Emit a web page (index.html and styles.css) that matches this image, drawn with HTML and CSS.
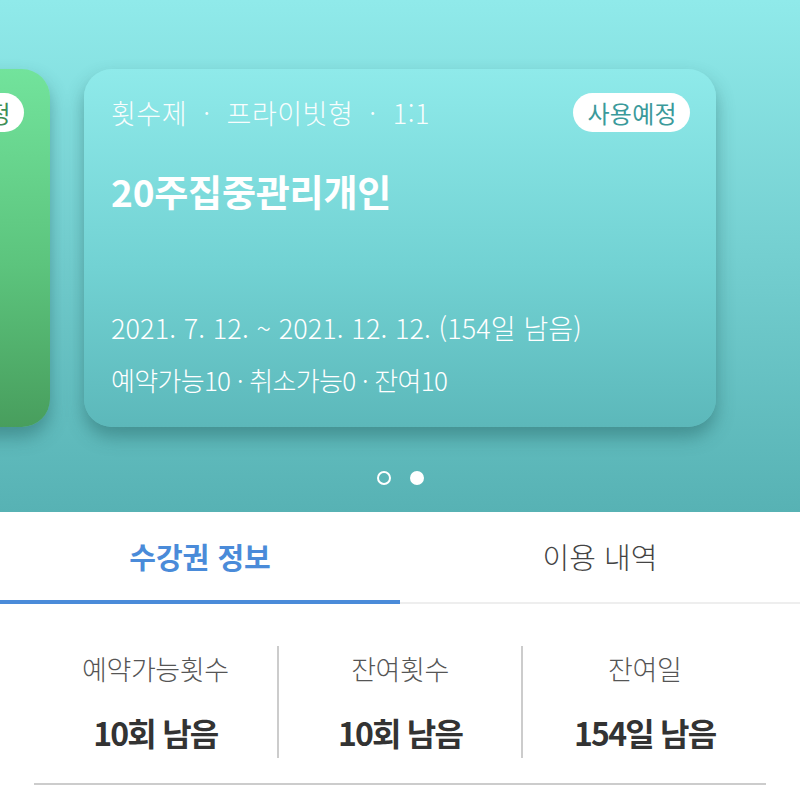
FILE: index.html
```html
<!DOCTYPE html>
<html lang="ko">
<head>
    <meta charset="UTF-8">
    <meta name="viewport" content="width=device-width, initial-scale=1.0">
    <title>수강권 정보</title>
    <link rel="stylesheet" href="styles.css">
</head>
<body>
    <div class="hero">
        <div class="card-track">
            <div class="pass-card pass-card-green">
                <div class="pass-top">
                    <span class="pass-meta">횟수제 · 프라이빗형 · 1:1</span>
                    <span class="pass-badge badge-green">사용예정</span>
                </div>
            </div>
            <div class="pass-card">
                <div class="pass-top">
                    <span class="pass-meta">횟수제 &nbsp;·&nbsp; 프라이빗형 &nbsp;·&nbsp; 1:1</span>
                    <span class="pass-badge">사용예정</span>
                </div>
                <h2 class="pass-title">20주집중관리개인</h2>
                <div class="pass-bottom">
                    <p class="pass-date">2021. 7. 12. ~ 2021. 12. 12. (154일 남음)</p>
                    <p class="pass-count">예약가능10 · 취소가능0 · 잔여10</p>
                </div>
            </div>
        </div>
        <div class="dots">
            <span class="dot"></span>
            <span class="dot active"></span>
        </div>
    </div>

    <div class="tabs">
        <div class="tab active">수강권 정보</div>
        <div class="tab">이용 내역</div>
    </div>

    <div class="stats">
        <div class="stat">
            <div class="stat-label">예약가능횟수</div>
            <div class="stat-value">10회 남음</div>
        </div>
        <div class="stat">
            <div class="stat-label">잔여횟수</div>
            <div class="stat-value">10회 남음</div>
        </div>
        <div class="stat">
            <div class="stat-label">잔여일</div>
            <div class="stat-value">154일 남음</div>
        </div>
    </div>
</body>
</html>
```

FILE: styles.css
```css
body {
    margin: 0;
    font-family: 'Noto Sans CJK KR', 'Noto Sans', sans-serif;
    background-color: #ffffff;
    color: #333;
}
.hero {
    height: 512px;
    background: linear-gradient(180deg, #90eaea 0%, #74cfd0 50%, #57b2b4 100%);
    overflow: hidden;
    padding-top: 69px;
    box-sizing: border-box;
}
.card-track {
    display: flex;
    gap: 34px;
    margin-left: -582px;
}
.pass-card {
    flex: 0 0 632px;
    height: 358px;
    box-sizing: border-box;
    padding: 24px 26px 28px 27px;
    border-radius: 28px;
    background: linear-gradient(180deg, #8feaea 0%, #72d2d3 55%, #5cb8ba 100%);
    box-shadow: 0px 10px 18px rgba(30, 90, 92, 0.45);
    color: #ffffff;
    display: flex;
    flex-direction: column;
}
.pass-card-green {
    background: linear-gradient(180deg, #72e39c 0%, #5cc47d 55%, #489e5d 100%);
}
.pass-top {
    display: flex;
    justify-content: space-between;
    align-items: center;
}
.pass-meta {
    font-size: 27px;
    font-weight: 300;
    letter-spacing: 0.5px;
    opacity: 0.95;
}
.pass-badge {
    background-color: #ffffff;
    color: #3b9a9b;
    font-size: 24px;
    line-height: 39px;
    padding: 0 13px 0 14px;
    border-radius: 20px;
    letter-spacing: 0.3px;
}
.badge-green {
    color: #3f8f57;
}
.pass-title {
    margin: 32px 0 0 0;
    font-size: 37px;
    font-weight: bold;
    letter-spacing: -0.2px;
}
.pass-bottom {
    margin-top: auto;
}
.pass-date {
    margin: 0;
    font-size: 27px;
    font-weight: 300;
    letter-spacing: 0.1px;
    line-height: 38px;
}
.pass-count {
    margin: 14px 0 0 0;
    font-size: 26px;
    font-weight: 300;
    letter-spacing: -0.7px;
    line-height: 38px;
}
.dots {
    display: flex;
    justify-content: center;
    gap: 19px;
    margin-top: 44px;
}
.dot {
    width: 14px;
    height: 14px;
    border-radius: 50%;
    border: 2px solid #ffffff;
    box-sizing: border-box;
}
.dot.active {
    background-color: #ffffff;
}
.tabs {
    display: flex;
    border-bottom: 2px solid #eeeeee;
}
.tab {
    flex: 1;
    height: 92px;
    display: flex;
    align-items: center;
    justify-content: center;
    font-size: 29px;
    font-weight: 300;
    color: #444;
    box-sizing: border-box;
    border-bottom: 4px solid transparent;
    margin-bottom: -2px;
}
.tab.active {
    color: #4a8bd9;
    font-weight: bold;
    border-bottom-color: #4a8bd9;
}
.stats {
    display: flex;
    margin: 42px 34px 0 34px;
    padding-bottom: 25px;
    border-bottom: 2px solid #cccccc;
}
.stat {
    flex: 1;
    height: 112px;
    text-align: center;
    border-left: 2px solid #cccccc;
}
.stat:first-child {
    border-left: none;
}
.stat-label {
    font-size: 27px;
    font-weight: 300;
    color: #555;
    letter-spacing: -0.4px;
    margin-top: 3px;
}
.stat-value {
    font-size: 32px;
    font-weight: bold;
    color: #333;
    letter-spacing: -1.8px;
    margin-top: 21px;
}
```
